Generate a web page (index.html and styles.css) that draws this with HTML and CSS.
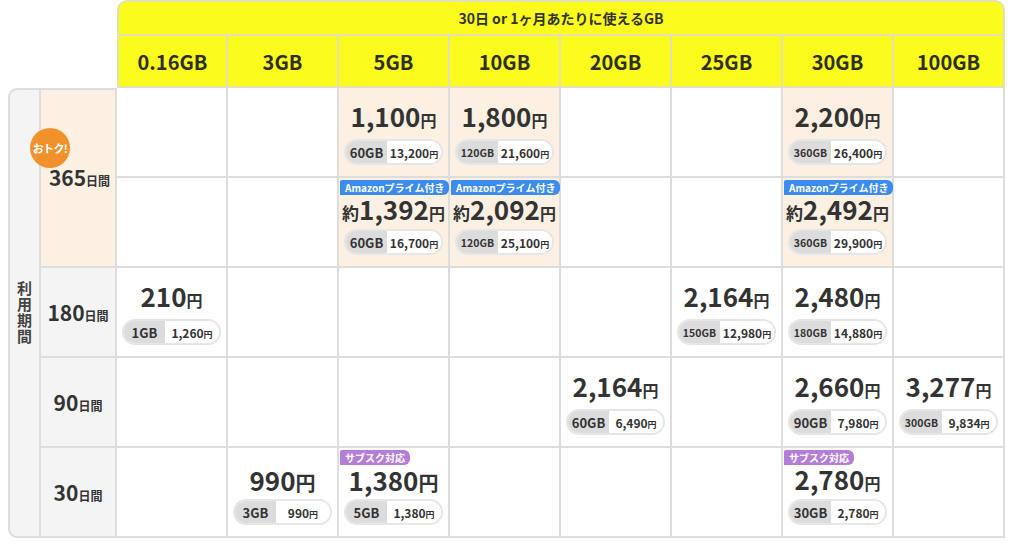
FILE: index.html
```html
<!DOCTYPE html>
<html lang="ja">
<head>
<meta charset="utf-8">
<title>料金表</title>
<link rel="stylesheet" href="styles.css">
</head>
<body>
<div class="table">
  <div class="corner"></div>
  <div class="title">30日 or 1ヶ月あたりに使えるGB</div>
  <div class="colh first">0.16GB</div>
  <div class="colh">3GB</div>
  <div class="colh">5GB</div>
  <div class="colh">10GB</div>
  <div class="colh">20GB</div>
  <div class="colh">25GB</div>
  <div class="colh">30GB</div>
  <div class="colh">100GB</div>

  <div class="label"><span>利用期間</span></div>
  <div class="rh r365"><div class="otoku">おトク!</div><span class="n">365</span><span class="u">日間</span></div>
  <!-- 365 row A -->
  <div class="cell"></div>
  <div class="cell"></div>
  <div class="cell hot"><div class="price">1,100<span class="yen">円</span></div><div class="pill"><span class="gb">60GB</span><span class="amt">13,200<small>円</small></span></div></div>
  <div class="cell hot"><div class="price">1,800<span class="yen">円</span></div><div class="pill"><span class="gb sm">120GB</span><span class="amt">21,600<small>円</small></span></div></div>
  <div class="cell"></div>
  <div class="cell"></div>
  <div class="cell hot"><div class="price">2,200<span class="yen">円</span></div><div class="pill"><span class="gb sm">360GB</span><span class="amt">26,400<small>円</small></span></div></div>
  <div class="cell"></div>
  <!-- 365 row B -->
  <div class="cell"></div>
  <div class="cell"></div>
  <div class="cell hot tight"><span class="badge amazon">Amazonプライム付き</span><div class="price"><span class="approx">約</span>1,392<span class="yen">円</span></div><div class="pill"><span class="gb">60GB</span><span class="amt">16,700<small>円</small></span></div></div>
  <div class="cell hot tight"><span class="badge amazon">Amazonプライム付き</span><div class="price"><span class="approx">約</span>2,092<span class="yen">円</span></div><div class="pill"><span class="gb sm">120GB</span><span class="amt">25,100<small>円</small></span></div></div>
  <div class="cell"></div>
  <div class="cell"></div>
  <div class="cell hot tight"><span class="badge amazon">Amazonプライム付き</span><div class="price"><span class="approx">約</span>2,492<span class="yen">円</span></div><div class="pill"><span class="gb sm">360GB</span><span class="amt">29,900<small>円</small></span></div></div>
  <div class="cell"></div>

  <!-- 180 -->
  <div class="rh"><span class="n">180</span><span class="u">日間</span></div>
  <div class="cell"><div class="price">210<span class="yen">円</span></div><div class="pill"><span class="gb">1GB</span><span class="amt">1,260<small>円</small></span></div></div>
  <div class="cell"></div>
  <div class="cell"></div>
  <div class="cell"></div>
  <div class="cell"></div>
  <div class="cell"><div class="price">2,164<span class="yen">円</span></div><div class="pill"><span class="gb sm">150GB</span><span class="amt">12,980<small>円</small></span></div></div>
  <div class="cell"><div class="price">2,480<span class="yen">円</span></div><div class="pill"><span class="gb sm">180GB</span><span class="amt">14,880<small>円</small></span></div></div>
  <div class="cell"></div>

  <!-- 90 -->
  <div class="rh"><span class="n">90</span><span class="u">日間</span></div>
  <div class="cell"></div>
  <div class="cell"></div>
  <div class="cell"></div>
  <div class="cell"></div>
  <div class="cell"><div class="price">2,164<span class="yen">円</span></div><div class="pill"><span class="gb">60GB</span><span class="amt">6,490<small>円</small></span></div></div>
  <div class="cell"></div>
  <div class="cell"><div class="price">2,660<span class="yen">円</span></div><div class="pill"><span class="gb">90GB</span><span class="amt">7,980<small>円</small></span></div></div>
  <div class="cell"><div class="price">3,277<span class="yen">円</span></div><div class="pill"><span class="gb sm">300GB</span><span class="amt">9,834<small>円</small></span></div></div>

  <!-- 30 -->
  <div class="rh"><span class="n">30</span><span class="u">日間</span></div>
  <div class="cell"></div>
  <div class="cell tight"><div class="price">990<span class="yen lg">円</span></div><div class="pill"><span class="gb">3GB</span><span class="amt">990<small>円</small></span></div></div>
  <div class="cell tight"><span class="badge sub">サブスク対応</span><div class="price">1,380<span class="yen lg">円</span></div><div class="pill"><span class="gb">5GB</span><span class="amt">1,380<small>円</small></span></div></div>
  <div class="cell"></div>
  <div class="cell"></div>
  <div class="cell"></div>
  <div class="cell tight"><span class="badge sub">サブスク対応</span><div class="price">2,780<span class="yen">円</span></div><div class="pill"><span class="gb">30GB</span><span class="amt">2,780<small>円</small></span></div></div>
  <div class="cell"></div>
</div>
</body>
</html>
```

FILE: styles.css
```css
* { box-sizing: border-box; }

body {
  margin: 0;
  background: #fff;
  color: #333;
  font-family: "Noto Sans CJK JP", "Noto Sans", sans-serif;
}

.table {
  display: grid;
  grid-template-columns: 33px 76px repeat(8, 111px);
  grid-template-rows: 36px 52px repeat(5, 90px);
  margin-left: 8px;
}

.corner {
  grid-column: span 2;
  grid-row: span 2;
}

.title {
  grid-column: span 8;
  background: #fbfb1e;
  border: 2px solid #e2e2b6;
  border-radius: 10px 10px 0 0;
  display: flex;
  align-items: center;
  justify-content: center;
  font-size: 14px;
  font-weight: 700;
}

.colh {
  background: #fbfb1e;
  border-right: 2px solid #e2e2b6;
  border-bottom: 2px solid #e2e2b6;
  display: flex;
  align-items: center;
  justify-content: center;
  font-size: 20px;
  font-weight: 700;
  color: #2e2e22;
}

.colh.first { border-left: 2px solid #e2e2b6; }

.label {
  grid-row: span 5;
  background: #f4f4f4;
  border: 2px solid #dddddd;
  border-radius: 9px 0 0 9px;
  display: flex;
  align-items: center;
  justify-content: center;
}

.label span {
  writing-mode: vertical-rl;
  text-orientation: upright;
  font-size: 15px;
  font-weight: 700;
  letter-spacing: 1px;
  color: #444;
}

.rh {
  background: #f4f4f4;
  border-right: 2px solid #dddddd;
  border-bottom: 2px solid #dddddd;
  display: flex;
  align-items: baseline;
  justify-content: center;
  align-content: center;
  flex-wrap: wrap;
  font-weight: 700;
  white-space: nowrap;
}

.rh.r365 {
  grid-row: span 2;
  background: #fcf0e2;
  border-top: 2px solid #dddddd;
  position: relative;
  padding-left: 3px;
  padding-bottom: 3px;
}

.rh .n { font-size: 21px; }
.rh .u { font-size: 12px; }

.otoku {
  position: absolute;
  left: -11px;
  top: 38px;
  width: 40px;
  height: 40px;
  border-radius: 50%;
  background: #f0912c;
  color: #fff;
  font-size: 11px;
  letter-spacing: -0.6px;
  font-weight: 700;
  display: flex;
  align-items: center;
  justify-content: center;
  z-index: 1;
}

.cell {
  position: relative;
  background: #fff;
  border-right: 2px solid #dddddd;
  border-bottom: 2px solid #dddddd;
  display: flex;
  flex-direction: column;
  align-items: center;
  justify-content: flex-end;
  padding-bottom: 11px;
}

.cell.hot { background: #fcf0e2; }

.price {
  font-size: 26px;
  font-weight: 700;
  line-height: 28px;
  margin-bottom: 5px;
  white-space: nowrap;
  color: #333;
}

.cell.tight .price { margin-bottom: 2px; }

.price .yen { font-size: 16px; }
.price .yen.lg { font-size: 20px; }
.price .approx { font-size: 17px; }

.pill {
  display: flex;
  width: 99px;
  height: 26px;
  border: 2px solid #e6e6e6;
  border-radius: 13px;
  overflow: hidden;
}

.pill .gb {
  width: 41px;
  background: #dcdcdc;
  font-size: 13px;
  font-weight: 700;
  display: flex;
  align-items: center;
  justify-content: center;
  white-space: nowrap;
}

.pill .gb.sm { font-size: 10.5px; }

.pill .amt {
  flex: 1;
  background: #fff;
  font-size: 12px;
  font-weight: 700;
  display: flex;
  align-items: baseline;
  justify-content: center;
  align-self: stretch;
  padding-top: 3px;
  white-space: nowrap;
}

.pill .amt small { font-size: 9px; }

.badge {
  position: absolute;
  top: 2px;
  left: 1px;
  height: 15px;
  line-height: 15px;
  padding: 0 5px;
  font-size: 10px;
  font-weight: 700;
  color: #fff;
  border-radius: 2px 6px 6px 0;
  white-space: nowrap;
}

.badge.amazon { background: #3b8cee; }
.badge.sub { background: #b47ed6; }
```
